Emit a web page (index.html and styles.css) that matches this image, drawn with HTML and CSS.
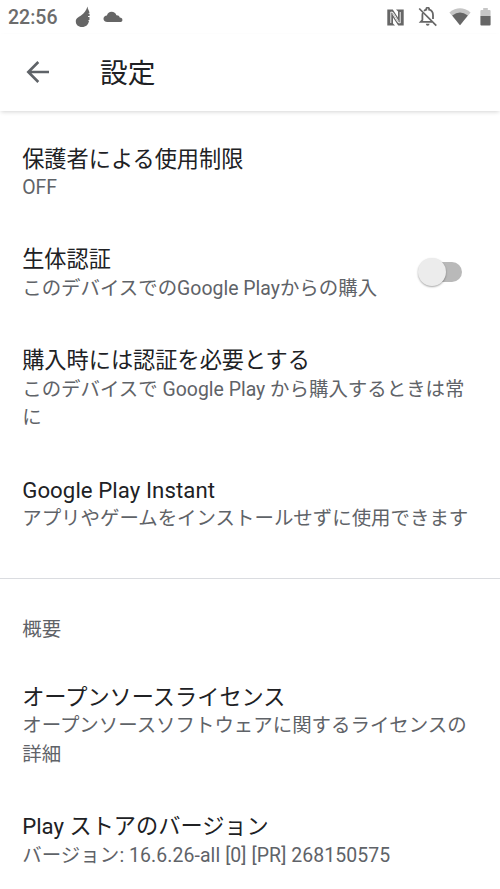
FILE: index.html
```html
<!DOCTYPE html>
<html lang="ja">
<head>
<meta charset="utf-8">
<title>設定</title>
<link rel="stylesheet" href="styles.css">
</head>
<body>
<div class="status">
  <span class="clock">22:56</span>
  <svg class="drop" width="16" height="22" viewBox="0 0 16 22"><path d="M12.500 .5C12.600 3.500 14.500 4.800 14.500 7.200L12.800 8H14.600V10H13V11H14.500V14H13L14 15C13.300 18.800 11 21 7 21C3.200 21 .8 18.500 .8 15.500C.8 12.500 3 11.600 6 9.600C9.200 7.300 11 4.800 12.500 .5Z"/></svg>
  <svg class="cloud" width="20" height="12" viewBox="0 0 20 12"><path d="M4.500 11C1.800 11 .5 9.700 .5 7.800C.5 5.800 2 4.600 3.900 4.500C4.700 2 6.300 .8 8.500 .8C11 .8 12.800 2.200 13.400 4.300C15.300 4.200 16.300 5.100 16.700 6.600C18.500 6.700 19.400 7.500 19.400 8.900C19.400 10.200 18.500 11 17 11Z"/></svg>
  <span class="space"></span>
  <svg class="nfc" width="17" height="17" viewBox="0 0 17 17"><path d="M.3 .5H5.800L11 8.500V2.500L9 .5H16.700V16.500H11.200L6 8.500V14.500L8 16.500H.3Z"/><path d="M3.800 14V3L6 3.500L11.500 12.500M13.200 3V14L11 13.500L5.500 4.500" fill="none" stroke="#fff" stroke-width=".9"/></svg>
  <svg class="bell" width="20" height="20" viewBox="0 0 20 20"><path d="M6 3.900C6.700 3.300 7.500 2.900 8.300 2.700V1.800Q8.300 .7 9.700 .7Q11.100 .7 11.100 1.800V2.700C13.600 3.400 15 5.500 15 8V12M4.800 6Q4.400 7 4.400 8.300V13L2.700 14.900H14" fill="none" stroke="#666" stroke-width="1.800"/><path d="M7.800 16.700H11.600Q11.500 18.700 9.700 18.700Q7.900 18.700 7.800 16.700Z"/><path d="M1.200 1.500L18.300 18.600" stroke="#666" stroke-width="1.700"/></svg>
  <svg class="wifi" width="22" height="18" viewBox="0 0 22 18"><path class="pale" d="M.4 4.400Q11-3.800 21.600 4.400L11 17.200Z"/><path d="M3.200 7.500Q11 1.500 18.800 7.500L11 17.200Z"/></svg>
  <svg class="battery" width="11" height="18" viewBox="0 0 11 18"><path class="pale" d="M3.200 0H7.800V2H9.600Q10.600 2 10.600 3V8H.4V3Q.4 2 1.400 2H3.200Z"/><path d="M.4 8H10.600V16.500Q10.600 17.600 9.600 17.600H1.400Q.4 17.600 .4 16.500Z"/></svg>
</div>
<header>
  <svg class="back" width="24" height="24" viewBox="0 0 24 24"><path d="M23 12H2.500M12.300 2L2.300 12L12.300 22" fill="none" stroke="#5f6368" stroke-width="2.600"/></svg>
  <h1>設定</h1>
</header>
<main>
  <section>
    <div class="item"><h2>保護者による使用制限</h2><p>OFF</p></div>
    <div class="item row">
      <div><h2>生体認証</h2><p>このデバイスでのGoogle Playからの購入</p></div>
      <span class="switch"><span class="track"></span><span class="thumb"></span></span>
    </div>
    <div class="item"><h2>購入時には認証を必要とする</h2><p>このデバイスで Google Play から購入するときは常<br>に</p></div>
    <div class="item"><h2 class="latin">Google Play Instant</h2><p>アプリやゲームをインストールせずに使用できます</p></div>
  </section>
  <section class="about">
    <h3>概要</h3>
    <div class="item"><h2>オープンソースライセンス</h2><p>オープンソースソフトウェアに関するライセンスの<br>詳細</p></div>
    <div class="item"><h2>Play ストアのバージョン</h2><p class="latin">バージョン: 16.6.26-all [0] [PR] 268150575</p></div>
  </section>
</main>
</body>
</html>
```
FILE: styles.css
```css
* { box-sizing: border-box; }
body {
  margin: 0;
  height: 889px;
  overflow: hidden;
  background: #fff;
  color: #202124;
  font-family: Roboto, "Noto Sans CJK JP", sans-serif;
}
h1, h2, h3, p { margin: 0; font-weight: 400; white-space: nowrap; }
svg { display: block; flex: none; }
.status {
  display: flex;
  align-items: center;
  height: 34px;
  padding: 0 9px 0 8px;
  fill: #666;
}
.clock { width: 67px; color: #6c6c6c; font-size: 19.500px; font-weight: 500; line-height: 34px; padding-top: 1px; }
.cloud { margin-left: 12px; }
.space { flex: 1; }
.nfc { margin-right: 1px; }
.bell { margin-left: 13px; }
.wifi { margin-left: 11px; }
.battery { margin-left: 9px; }
.pale { fill: #c6c6c6; }
header {
  display: flex;
  align-items: center;
  height: 77px;
  padding: 0 26px 2px;
  box-shadow: 0 2px 4px -1px rgba(0, 0, 0, .17);
}
h1 { margin: 4px 0 0 50px; font-size: 27.700px; line-height: 40px; }
main { padding-top: 12px; }
.item { padding: 21.600px 22.200px; }
.row { display: flex; justify-content: space-between; align-items: center; }
h2 { height: 28.800px; font-size: 22.200px; line-height: 28.800px; }
p { font-size: 19.440px; line-height: 28.800px; color: #5f6368; }
.item p { padding-top: .6px; margin-bottom: -.6px; }
.latin { letter-spacing: .08px; }
.switch { position: relative; width: 62px; height: 34px; }
.track {
  position: absolute;
  left: 12px;
  top: 5px;
  width: 34px;
  height: 20px;
  border-radius: 10px;
  background: #b9b9b9;
}
.thumb {
  position: absolute;
  left: 2px;
  top: 1px;
  width: 28px;
  height: 28px;
  border-radius: 50%;
  background: #ececec;
  box-shadow: 0 1px 2px rgba(0, 0, 0, .35);
}
.about { margin-top: 23px; border-top: 1px solid #dadce0; }
h3 { padding: 37.300px 22.200px 16.200px; font-size: 19.440px; line-height: 28.800px; color: #5f6368; }
```
